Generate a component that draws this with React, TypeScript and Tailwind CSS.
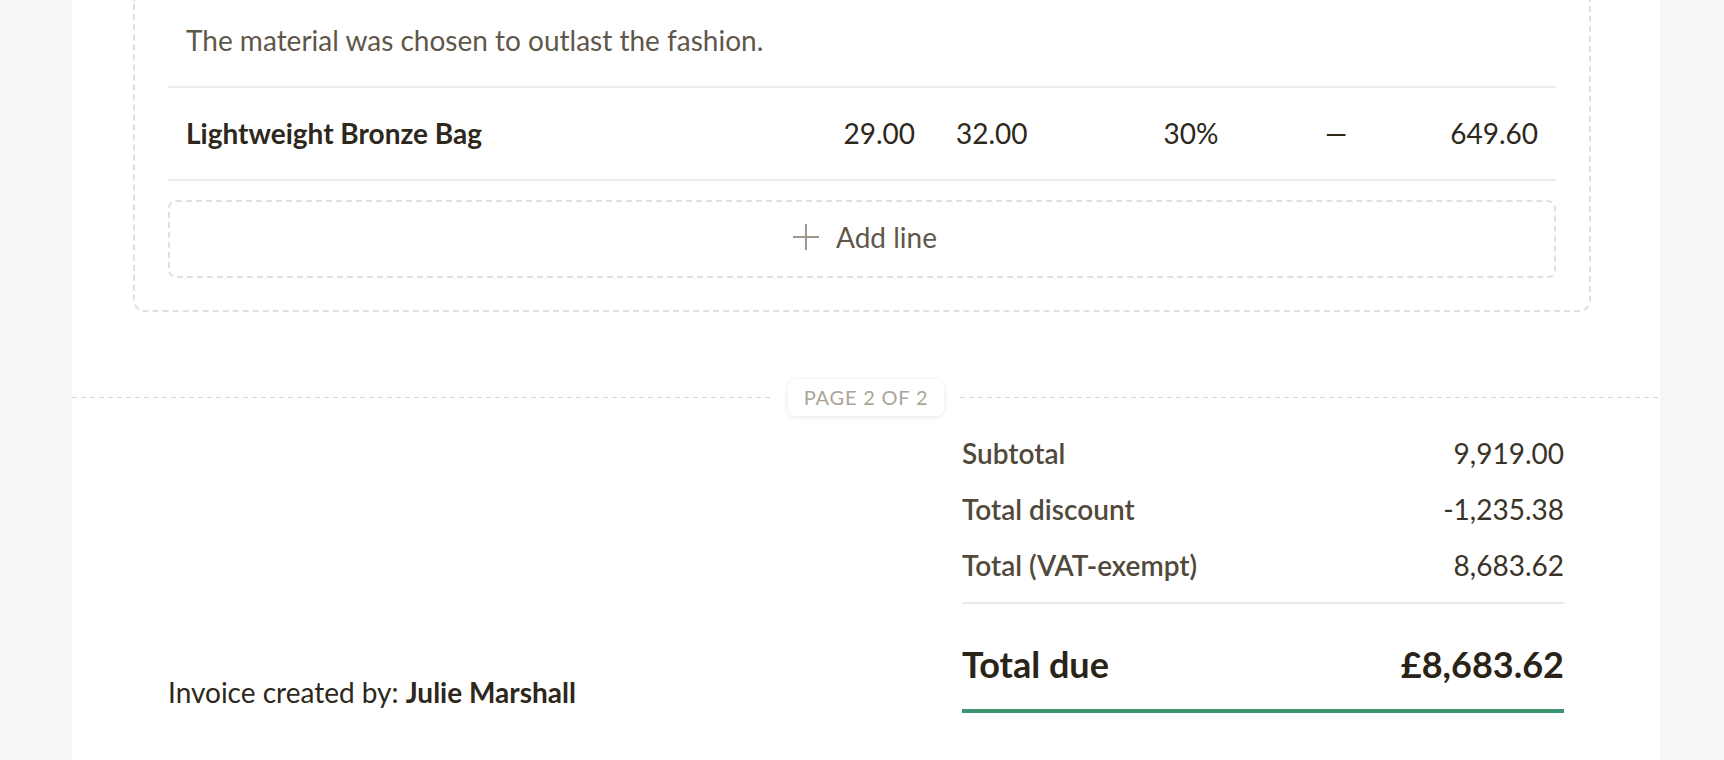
export default function App() {
  return (
    <div className="min-h-screen bg-[#f7f6f4] font-[Lato,'Noto_Sans',sans-serif]">
      <div className="ml-[72px] w-[1588px] bg-white pb-[48px]">
        {/* Line items card */}
        <div className="ml-[61px] w-[1458px] rounded-b-[12px] border-2 border-t-0 border-dashed border-[#e3e0da] px-[33px] pb-[32px]">
          <div className="flex h-[88px] items-center border-b-2 border-[#ecebe6] px-[18px] pb-[6px] text-[28px] leading-[42px] text-[#5e574a]">
            The material was chosen to outlast the fashion.
          </div>
          <div className="flex h-[93px] items-center border-b-2 border-[#ecebe6] pb-[2px] text-[28px] leading-[42px] text-[#2d271c]">
            <div className="w-[645px] px-[18px] font-bold">Lightweight Bronze Bag</div>
            <div className="w-[120px] pr-[18px] text-right">29.00</div>
            <div className="w-[160px] pl-[23px] text-left">32.00</div>
            <div className="w-[196px] text-center">30%</div>
            <div className="w-[94px] text-center">—</div>
            <div className="w-[173px] pr-[18px] text-right">649.60</div>
          </div>
          <button
            type="button"
            className="mt-[19px] flex h-[78px] w-full items-center justify-center gap-[16px] rounded-[8px] border-2 border-dashed border-[#e3e0da] pb-[4px] pl-[5px] text-[28px] leading-[42px] text-[#5e574a]"
          >
            <svg width="28" height="28" viewBox="0 0 28 28" fill="none" stroke="#9e988a" strokeWidth="2">
              <path d="M14 1v26M1 14h26" />
            </svg>
            <span>Add line</span>
          </button>
        </div>

        {/* Page separator */}
        <div className="mt-[67px] flex items-center">
          <div className="h-px flex-1 bg-[repeating-linear-gradient(to_right,#d7d4cd_0_5px,transparent_5px_9px)]" />
          <div className="mx-[16px] flex h-[37px] items-center rounded-[8px] bg-white px-[16px] text-[20px] leading-[25px] tracking-[0.04em] text-[#aaa597] shadow-[0_1px_5px_rgba(60,50,30,0.12)]">
            PAGE 2 OF 2
          </div>
          <div className="h-px flex-1 bg-[repeating-linear-gradient(to_right,#d7d4cd_0_5px,transparent_5px_9px)]" />
        </div>

        {/* Footer: creator + totals */}
        <div className="mt-[16px] flex items-end justify-between px-[96px]">
          <div className="mb-[0px] text-[28px] leading-[42px] text-[#2d271c]">
            Invoice created by: <span className="font-bold">Julie Marshall</span>
          </div>
          <div className="w-[602px]">
            <div className="flex flex-col gap-[14px] text-[28px] leading-[42px]">
              <div className="flex items-center justify-between">
                <span className="font-semibold text-[#51493b]">Subtotal</span>
                <span className="text-[#3a3428]">9,919.00</span>
              </div>
              <div className="flex items-center justify-between">
                <span className="font-semibold text-[#51493b]">Total discount</span>
                <span className="text-[#3a3428]">-1,235.38</span>
              </div>
              <div className="flex items-center justify-between">
                <span className="font-semibold text-[#51493b]">Total (VAT-exempt)</span>
                <span className="text-[#3a3428]">8,683.62</span>
              </div>
            </div>
            <div className="mt-[16px] h-[2px] bg-[#ebe9e4]" />
            <div className="flex items-center justify-between border-b-4 border-[#3a9470] pb-[22px] pt-[37px] text-[36px] font-bold leading-[46px] text-[#2a2418]">
              <span>Total due</span>
              <span>£8,683.62</span>
            </div>
          </div>
        </div>
      </div>
    </div>
  );
}
